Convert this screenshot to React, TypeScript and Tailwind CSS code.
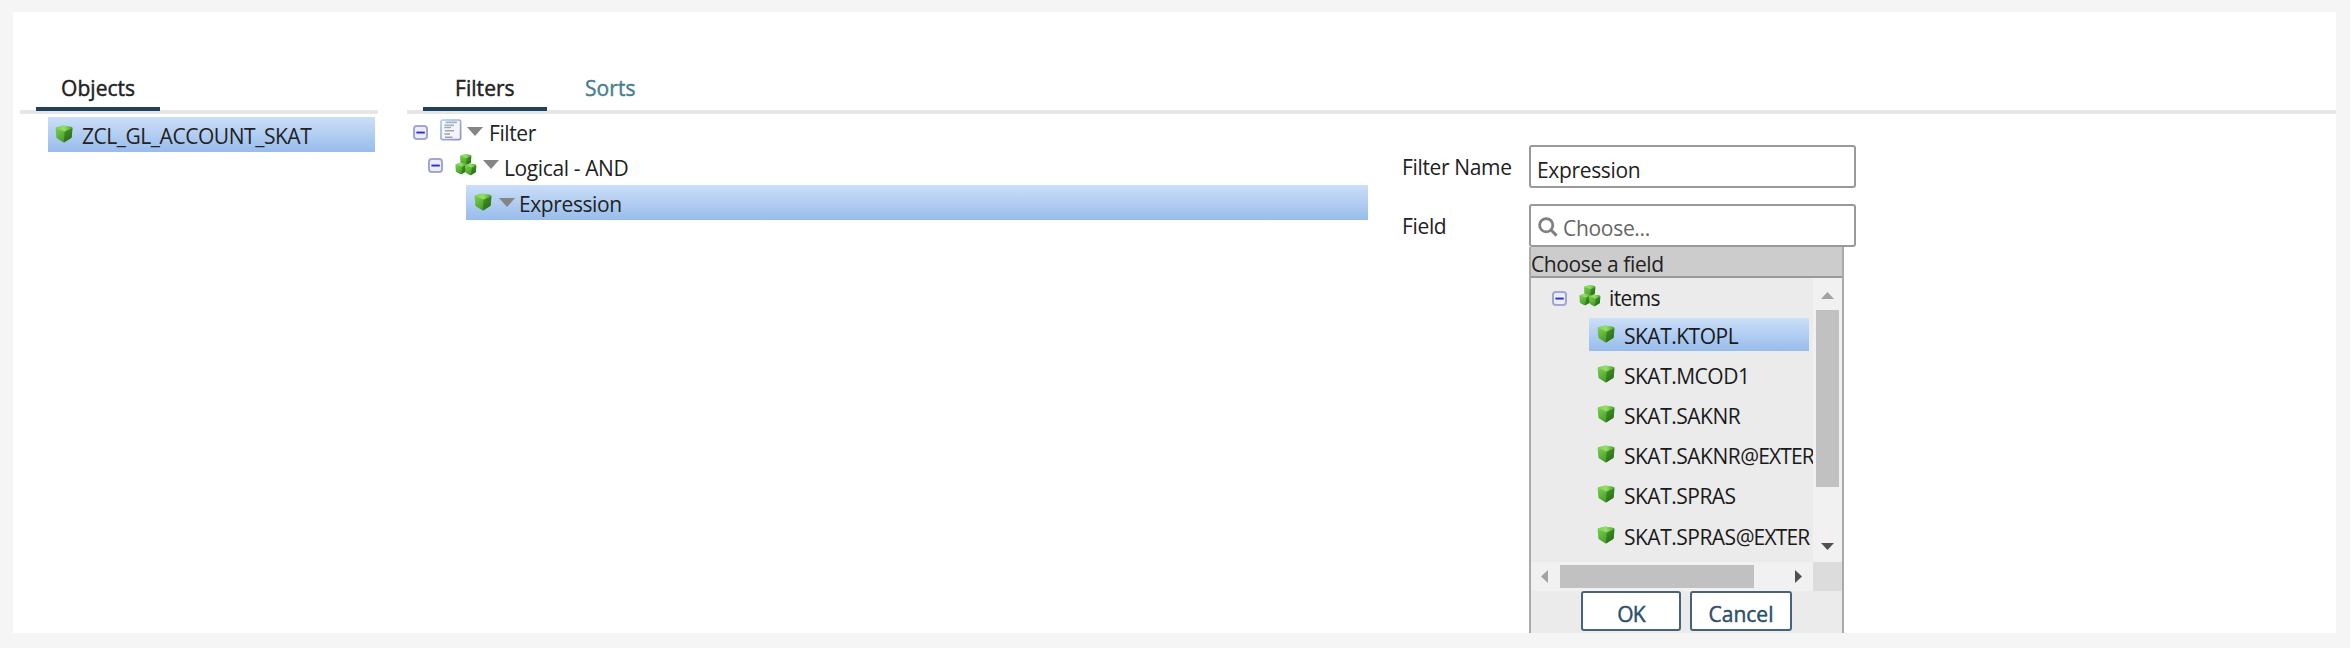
import type { ReactNode } from 'react'

function Gradients() {
  return (
    <svg className="absolute h-0 w-0" aria-hidden="true">
      <defs>
        <linearGradient id="cube-left" x1="0" y1="0" x2="0.6" y2="1">
          <stop offset="0" stopColor="#84d455" />
          <stop offset="1" stopColor="#3f9824" />
        </linearGradient>
        <linearGradient id="cube-right" x1="0" y1="0" x2="0.5" y2="1">
          <stop offset="0" stopColor="#46942b" />
          <stop offset="1" stopColor="#2a6f18" />
        </linearGradient>
        <linearGradient id="cube-top" x1="0" y1="0" x2="1" y2="0">
          <stop offset="0" stopColor="#7fd052" />
          <stop offset="0.5" stopColor="#93e068" />
          <stop offset="1" stopColor="#4fa033" />
        </linearGradient>
        <linearGradient id="doc-border" x1="0" y1="0" x2="1" y2="1">
          <stop offset="0" stopColor="#a9cdef" />
          <stop offset="1" stopColor="#8c8fc4" />
        </linearGradient>
      </defs>
    </svg>
  )
}

function Cube({ className = '' }: { className?: string }) {
  return (
    <svg viewBox="0 0 18 18" className={`h-[18px] w-[18px] shrink-0 ${className}`}>
      <path d="M0.6 3.4Q0.6 2.6 1.6 2.3L7.6 0.7Q8.4 0.5 9.4 0.7L16.6 2Q17.5 2.3 17.4 3.2L16.8 11.6Q16.7 12.6 15.8 13.2L9.8 17.1Q8.8 17.7 7.8 17.1L2.3 13.6Q1.6 13.1 1.4 12.2Z" fill="url(#cube-left)" />
      <path d="M17.4 3 9.6 6.4 8.8 17.5Q9.3 17.5 9.8 17.1L15.8 13.2Q16.7 12.6 16.8 11.6Z" fill="url(#cube-right)" />
      <path d="M0.7 3Q0.8 2.5 1.6 2.3L7.6 0.7Q8.4 0.5 9.4 0.7L16.6 2Q17.2 2.2 17.4 2.8L9.6 6.4Z" fill="url(#cube-top)" />
    </svg>
  )
}

function Cubes({ className = '' }: { className?: string }) {
  const cube = (x: number, y: number) => (
    <g transform={`translate(${x} ${y})`}>
      <path d="M0.4 2.6Q0.5 1.8 1.3 1.5L4.8 0.4Q5.6 0.2 6.4 0.3L10.8 1Q11.7 1.2 11.7 2.2L11.3 8Q11.2 8.8 10.5 9.2L6.8 11.5Q5.9 12 5 11.5L1.6 9.6Q0.9 9.2 0.8 8.4Z" fill="url(#cube-left)" />
      <path d="M11.7 2 7.2 4 6.4 11.7 10.5 9.2Q11.2 8.8 11.3 8Z" fill="url(#cube-right)" />
      <path d="M0.5 2.2Q0.7 1.7 1.3 1.5L4.8 0.4Q5.6 0.2 6.4 0.3L10.8 1Q11.5 1.2 11.6 1.8L7.2 4Z" fill="url(#cube-top)" />
    </g>
  )
  return (
    <svg viewBox="0 0 22 22" className={`h-[22px] w-[22px] shrink-0 ${className}`}>
      {cube(4.6, 0)}
      {cube(0, 8.6)}
      {cube(9.6, 9.4)}
    </svg>
  )
}

function Minus({ className = '' }: { className?: string }) {
  return (
    <svg viewBox="0 0 15 15" className={`h-[15px] w-[15px] shrink-0 ${className}`}>
      <rect x="1" y="1" width="13" height="13" rx="2.8" fill="#ededf9" stroke="#a3a7d0" strokeWidth="2" />
      <rect x="3.4" y="6.6" width="8.4" height="1.9" fill="#2c2cd6" />
    </svg>
  )
}

function Doc({ className = '' }: { className?: string }) {
  return (
    <svg viewBox="0 0 22 22" className={`h-[22px] w-[22px] shrink-0 ${className}`}>
      <rect x="1" y="1" width="19.6" height="19.6" rx="1.6" fill="#f3f7fd" stroke="url(#doc-border)" strokeWidth="1.7" />
      <path d="M5.6 3.4H17M4.4 6.4H14" stroke="#a3b4c4" strokeWidth="1.6" />
      <path d="M4.4 8.6H11M5 11.8H14M4.4 15H10M5 18.2H12.6" stroke="#a3a3a3" strokeWidth="1.4" />
    </svg>
  )
}

function Caret({ className = '' }: { className?: string }) {
  return (
    <svg viewBox="0 0 16 9" className={`h-[9px] w-[16px] shrink-0 ${className}`}>
      <path d="M0 0H16L8 9Z" fill="#858585" />
    </svg>
  )
}

function FieldItem({ children, suffix, selected = false }: { children: ReactNode; suffix?: string; selected?: boolean }) {
  return (
    <div className="h-10 pl-[58px]">
      <div className={`flex h-[33px] pl-2 ${selected ? 'w-[220px] bg-linear-to-b from-[#cbdff8] to-[#98bceb]' : ''}`}>
        <Cube className="mt-[7px]" />
        <span className="ml-[9px] mt-1 whitespace-nowrap tracking-[-0.5px]">
          {children}
          {suffix && <span className="tracking-[-0.85px]">{suffix}</span>}
        </span>
      </div>
    </div>
  )
}

export default function App() {
  return (
    <div className="h-[648px] w-[2350px] bg-[#f5f5f5] pl-[13px] pt-3 font-['Open_Sans',sans-serif] text-[21px] leading-[28px] text-[#222]">
      <Gradients />
      <div className="flex h-[621px] w-[2323px] overflow-hidden bg-white">
        <section className="ml-[7px] mt-[62px] w-[358px]">
          <div className="flex h-[40px] border-b-4 border-[#e6e6e6] pl-4">
            <div className="z-10 h-[37px] w-[124px] border-b-4 border-[#1f415c] pl-[25px]">
              <span className="tracking-[0.05px] [-webkit-text-stroke:0.45px]">Objects</span>
            </div>
          </div>
          <div className="ml-7 mt-[3px] flex h-[35px] w-[327px] bg-linear-to-b from-[#cbdff8] to-[#98bceb] pl-[7px]">
            <Cube className="mt-[8px]" />
            <span className="ml-[9px] mt-[5px] tracking-[-0.46px]">ZCL_GL_ACCOUNT_SKAT</span>
          </div>
        </section>

        <section className="ml-[29px] mt-[62px] w-[1929px]">
          <div className="flex h-[40px] border-b-4 border-[#e6e6e6] pl-4">
            <div className="z-10 h-[37px] w-[124px] border-b-4 border-[#1f415c] pl-8">
              <span className="tracking-[0.05px] [-webkit-text-stroke:0.45px]">Filters</span>
            </div>
            <div className="pl-[38px] text-[#4b7f8c]">
              <span className="tracking-[0.05px] [-webkit-text-stroke:0.45px]">Sorts</span>
            </div>
          </div>

          <div className="flex">
            <div className="w-[962px]">
              <div className="flex h-9 pl-[6px]">
                <Minus className="mt-[11px]" />
                <Doc className="ml-3 mt-[5px]" />
                <Caret className="ml-[5px] mt-[13px]" />
                <span className="ml-[6px] mt-[5px] tracking-[-0.4px]">Filter</span>
              </div>
              <div className="flex h-[35px] pl-[21px]">
                <Minus className="mt-[8px]" />
                <Cubes className="ml-3 mt-[4px]" />
                <Caret className="ml-[6px] mt-[10px]" />
                <span className="ml-[5px] mt-[4px] tracking-[-0.38px]">Logical - AND</span>
              </div>
              <div className="ml-[59px] flex h-[35px] w-[902px] bg-linear-to-b from-[#cbdff8] to-[#98bceb] pl-2">
                <Cube className="mt-[8px]" />
                <Caret className="ml-[7px] mt-[13px]" />
                <span className="ml-[4px] mt-[5px] tracking-[-0.4px]">Expression</span>
              </div>
            </div>

            <form className="ml-[33px] w-[900px] pt-[31px]">
              <div className="flex h-[59px]">
                <label className="mt-[8px] w-[127px] tracking-[-0.35px]">Filter Name</label>
                <div className="h-[43px] w-[327px] rounded-[3px] border-2 border-[#999] pl-[6px] pt-[9px]">
                  <span className="tracking-[-0.35px]">Expression</span>
                </div>
              </div>
              <div className="flex h-[43px]">
                <label className="mt-[8px] w-[127px] tracking-[-0.35px]">Field</label>
                <div className="flex h-[43px] w-[327px] rounded-[3px] border-2 border-[#999] pl-[7px] text-[#666]">
                  <svg viewBox="0 0 20 20" className="mt-[11px] h-5 w-5">
                    <circle cx="8.2" cy="8.2" r="6.6" fill="none" stroke="#808080" strokeWidth="2.8" />
                    <path d="M12.8 12.8 18.6 18.6" stroke="#808080" strokeWidth="3" />
                  </svg>
                  <span className="ml-[5px] mt-[8px] tracking-[-0.3px]">Choose...</span>
                </div>
              </div>

              <div className="ml-[127px] h-[386px] w-[315px] border-x-2 border-[#aaa] bg-[#ebebeb]">
                <div className="h-[31px] border-b-2 border-[#999] bg-[#ccc] pt-[3px]">
                  <span className="tracking-[-0.38px]">Choose a field</span>
                </div>
                <div className="flex h-[284px]">
                  <div className="w-[282px] overflow-hidden text-[#1a1a1a]">
                    <div className="flex h-10 pl-[21px]">
                      <Minus className="mt-[13px]" />
                      <Cubes className="ml-3 mt-[7px]" />
                      <span className="ml-[8px] mt-[6px] tracking-[-0.6px]">items</span>
                    </div>
                    <FieldItem selected>SKAT.KTOPL</FieldItem>
                    <FieldItem>SKAT.MCOD1</FieldItem>
                    <FieldItem>SKAT.SAKNR</FieldItem>
                    <FieldItem suffix="@EXTER">SKAT.SAKNR</FieldItem>
                    <FieldItem>SKAT.SPRAS</FieldItem>
                    <div className="pt-px">
                      <FieldItem suffix="@EXTER">SKAT.SPRAS</FieldItem>
                    </div>
                  </div>
                  <div className="flex w-[29px] flex-col items-center bg-[#f1f1f1]">
                    <svg viewBox="0 0 13 7" className="mt-[14px] h-[7px] w-[13px]"><path d="M0 7H13L6.5 0Z" fill="#a3a3a3" /></svg>
                    <div className="mt-[11px] h-[177px] w-[23px] bg-[#c1c1c1]" />
                    <svg viewBox="0 0 13 7" className="mt-[56px] h-[7px] w-[13px]"><path d="M0 0H13L6.5 7Z" fill="#505050" /></svg>
                  </div>
                </div>
                <div className="flex h-[29px]">
                  <div className="flex w-[282px] items-center bg-[#f1f1f1] pl-[10px]">
                    <svg viewBox="0 0 7 13" className="h-[13px] w-[7px]"><path d="M7 0V13L0 6.5Z" fill="#a3a3a3" /></svg>
                    <div className="ml-3 h-[23px] w-[194px] bg-[#c1c1c1]" />
                    <svg viewBox="0 0 7 13" className="ml-[41px] h-[13px] w-[7px]"><path d="M0 0V13L7 6.5Z" fill="#505050" /></svg>
                  </div>
                  <div className="w-[29px] bg-[#dcdcdc]" />
                </div>
                <div className="flex gap-[9px] pl-[50px] text-[#2d4f6b]">
                  <button type="button" className="h-10 w-[100px] rounded-[3px] border-2 border-[#45647c] bg-white pt-[5px]">
                    <span className="tracking-[-0.8px] [-webkit-text-stroke:0.45px]">OK</span>
                  </button>
                  <button type="button" className="h-10 w-[102px] rounded-[3px] border-2 border-[#45647c] bg-white pt-[5px]">
                    <span className="[-webkit-text-stroke:0.45px]">Cancel</span>
                  </button>
                </div>
              </div>
            </form>
          </div>
        </section>
      </div>
    </div>
  )
}
